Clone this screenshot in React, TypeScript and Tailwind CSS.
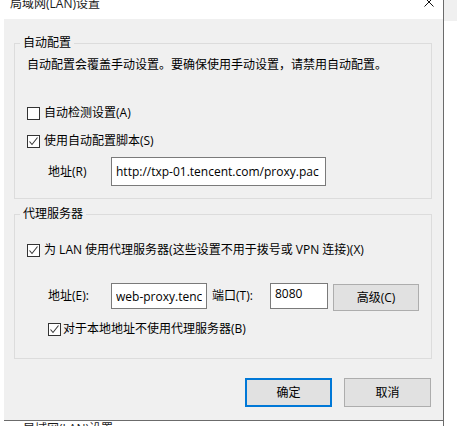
import { useState } from 'react';

const font = { fontFamily: '"Open Sans", "Noto Sans CJK SC", sans-serif' };

const Check = ({ checked, onChange }: { checked: boolean; onChange: () => void }) => (
    <button
        onClick={onChange}
        className="w-[13px] h-[13px] border border-[#333333] bg-white flex items-center justify-center shrink-0"
    >
        {checked && (
            <svg width="11" height="11" viewBox="0 0 11 11">
                <polyline points="1.5,5.5 4,8.5 9.5,1.5" fill="none" stroke="#3a3a3a" strokeWidth="1.1" />
            </svg>
        )}
    </button>
);

const App = () => {
    const [autoDetect, setAutoDetect] = useState(false);
    const [useScript, setUseScript] = useState(true);
    const [useProxy, setUseProxy] = useState(true);
    const [bypassLocal, setBypassLocal] = useState(true);

    return (
        <div className="w-[457px] h-[426px] bg-white flex overflow-hidden text-[12px] leading-[16px] text-black" style={font}>
            <div className="w-[444px] flex flex-col border-r border-[#6b6b6b]">
                {/* title bar, scrolled off the top */}
                <div className="h-[19px] shrink-0 flex items-start justify-between pl-[10px] pr-[9px] overflow-hidden">
                    <span className="-mt-[4px] text-[#1a1a1a]">局域网(LAN)设置</span>
                    <svg width="10" height="10" viewBox="0 0 10 10" className="-mt-[3px]">
                        <path d="M0.5 0.5 L9.5 9.5 M9.5 0.5 L0.5 9.5" stroke="#111" strokeWidth="1" />
                    </svg>
                </div>

                <div className="flex shrink-0">
                    <div className="w-[4px]" />
                    <div className="w-[439px] h-[401px] bg-[#f0f0f0] flex flex-col pl-[10px] pr-[11px]">
                        <fieldset className="mt-[16px] border border-[#dcdcdc] px-[12px] pb-[12px]">
                            <legend className="-ml-[7px] px-[3px] leading-[16px]">自动配置</legend>
                            <p className="mt-[6px] h-[16px]">自动配置会覆盖手动设置。要确保使用手动设置，请禁用自动配置。</p>
                            <label className="mt-[32px] h-[16px] flex items-center gap-[4px]">
                                <Check checked={autoDetect} onChange={() => setAutoDetect(!autoDetect)} />
                                <span>自动检测设置(A)</span>
                            </label>
                            <label className="mt-[12px] h-[16px] flex items-center gap-[4px]">
                                <Check checked={useScript} onChange={() => setUseScript(!useScript)} />
                                <span>使用自动配置脚本(S)</span>
                            </label>
                            <div className="mt-[8px] flex items-center pl-[21px]">
                                <span className="w-[63px]">地址(R)</span>
                                <input
                                    defaultValue="http://txp-01.tencent.com/proxy.pac"
                                    className="w-[215px] h-[29px] border border-[#7a7a7a] bg-white px-[4px] text-[12px] outline-none"
                                    style={font}
                                />
                            </div>
                        </fieldset>

                        <fieldset className="mt-[7px] border border-[#dcdcdc] px-[12px] pb-[21px]">
                            <legend className="-ml-[7px] px-[3px] leading-[16px]">代理服务器</legend>
                            <label className="mt-[20px] h-[16px] flex items-center gap-[4px]">
                                <Check checked={useProxy} onChange={() => setUseProxy(!useProxy)} />
                                <span>为 LAN 使用代理服务器(这些设置不用于拨号或 VPN 连接)(X)</span>
                            </label>
                            <div className="mt-[25px] h-[27px] flex items-start pl-[21px]">
                                <span className="w-[63px] h-[26px] flex items-center">地址(E):</span>
                                <input
                                    defaultValue="web-proxy.tencent.com"
                                    className="w-[96px] h-[26px] border border-[#7a7a7a] bg-white px-[4px] text-[12px] outline-none"
                                    style={font}
                                />
                                <span className="ml-[5px] w-[58px] h-[26px] flex items-center">端口(T):</span>
                                <input
                                    defaultValue="8080"
                                    className="w-[58px] h-[26px] border border-[#7a7a7a] bg-white px-[4px] pb-[6px] text-[12px] outline-none"
                                    style={font}
                                />
                                <button className="ml-[5px] mt-[1px] w-[86px] h-[27px] border border-[#adadad] bg-[#e1e1e1]">
                                    高级(C)
                                </button>
                            </div>
                            <label className="mt-[11px] h-[16px] flex items-center gap-[2px] pl-[21px]">
                                <Check checked={bypassLocal} onChange={() => setBypassLocal(!bypassLocal)} />
                                <span>对于本地地址不使用代理服务器(B)</span>
                            </label>
                        </fieldset>

                        <div className="mt-[19px] flex justify-end gap-[12px] pr-[1px]">
                            <button className="w-[87px] h-[29px] border-2 border-[#0078d7] bg-[#e1e1e1]">确定</button>
                            <button className="w-[87px] h-[29px] border border-[#adadad] bg-[#e1e1e1]">取消</button>
                        </div>
                    </div>
                </div>
                <div className="ml-[4px] h-[1px] shrink-0 bg-[#6b6b6b]" />
                <div className="pl-[23px] shrink-0 text-[#1a1a1a]">局域网(LAN)设置</div>
            </div>
            <div className="flex-1 flex flex-col">
                <div className="h-[21px] bg-[#f0f0f0]" />
            </div>
        </div>
    );
};

export default App;
